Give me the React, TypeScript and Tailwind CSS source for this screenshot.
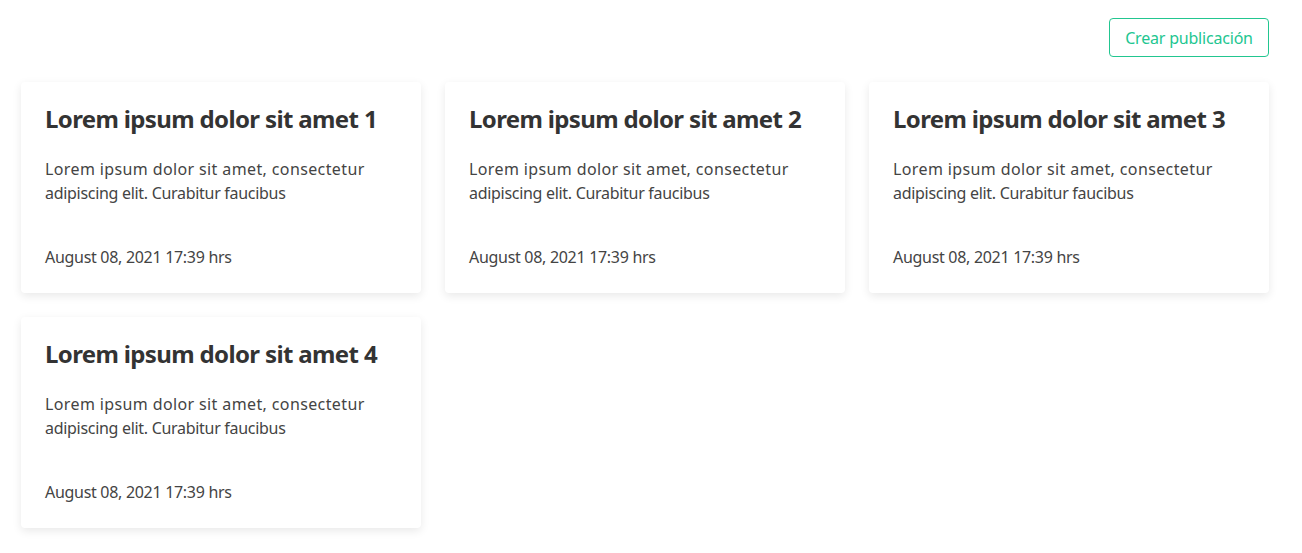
export default function App() {
  const posts = [1, 2, 3, 4];
  return (
    <div className="min-h-screen bg-white font-['Noto_Sans',sans-serif] text-[#333]">
      <div className="ml-[21px] w-[1248px] pt-[18px]">
        <div className="flex justify-end">
          <button className="h-[39px] w-[160px] rounded-[4px] border border-[#22c690] text-[16px] tracking-[-0.2px] text-[#22c690]">
            Crear publicación
          </button>
        </div>
        <div className="mt-[25px] grid grid-cols-3 gap-6">
          {posts.map((n) => (
            <div
              key={n}
              className="h-[211px] rounded-[4px] bg-white p-6 shadow-[0_3px_10px_rgba(0,0,0,0.09)]"
            >
              <h2 className="-mt-[1px] text-[24px] font-bold leading-[1.2] tracking-[-0.64px] text-[#333]">
                Lorem ipsum dolor sit amet {n}
              </h2>
              <p className="mt-[23px] text-[16px] leading-6 text-[#444]">
                <span className="tracking-[0.38px]">Lorem ipsum dolor sit amet, consectetur</span>
                <br />
                <span className="tracking-[-0.3px]">adipiscing elit. Curabitur faucibus</span>
              </p>
              <p className="mt-[40px] text-[16px] leading-6 tracking-[-0.3px] text-[#444]">
                August 08, 2021 17:39 hrs
              </p>
            </div>
          ))}
        </div>
      </div>
    </div>
  );
}
